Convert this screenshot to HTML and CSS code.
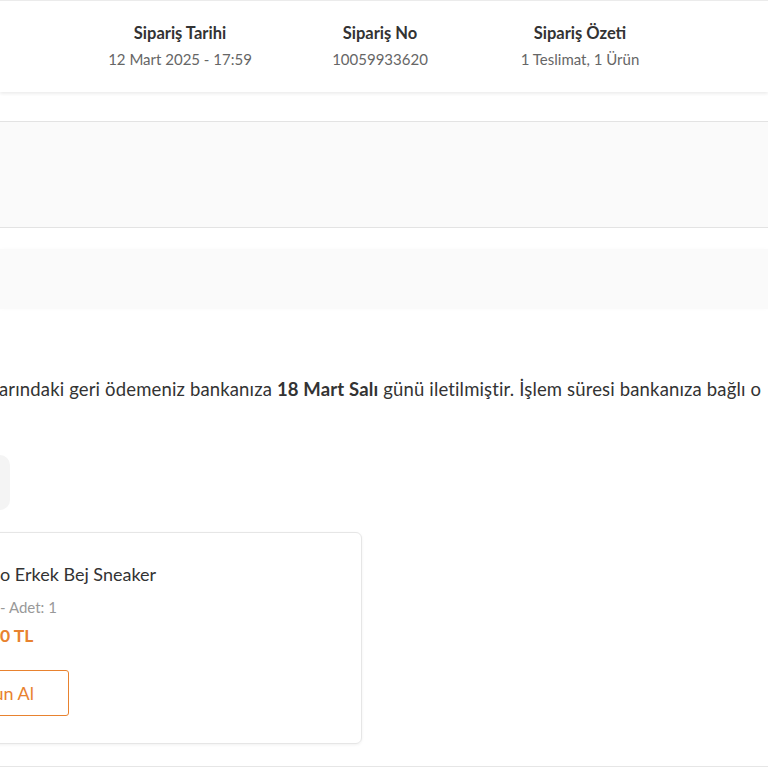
FILE: index.html
```html
<!DOCTYPE html>
<html lang="tr">
<head>
<meta charset="utf-8">
<title>Sipariş Detayı</title>
<link rel="stylesheet" href="styles.css">
</head>
<body>
<div class="page">
  <header class="order-header">
    <div class="col">
      <div class="col-title">Sipariş Tarihi</div>
      <div class="col-value">12 Mart 2025 - 17:59</div>
    </div>
    <div class="col">
      <div class="col-title">Sipariş No</div>
      <div class="col-value">10059933620</div>
    </div>
    <div class="col">
      <div class="col-title">Sipariş Özeti</div>
      <div class="col-value">1 Teslimat, 1 Ürün</div>
    </div>
  </header>

  <section class="status-box"></section>

  <div class="band"></div>

  <p class="refund-note">arındaki geri ödemeniz bankanıza <b>18 Mart Salı</b> günü iletilmiştir. İşlem süresi bankanıza bağlı o</p>

  <div class="pill"></div>

  <div class="card">
    <div class="product-name">o Erkek Bej Sneaker</div>
    <div class="product-meta">- Adet: 1</div>
    <div class="product-price">0 TL</div>
    <button class="rebuy">un Al</button>
  </div>

  <div class="bottom-rule"></div>
</div>
</body>
</html>
```
FILE: styles.css
```css
html, body {
  margin: 0;
  padding: 0;
  background: #fff;
}
body {
  width: 768px;
  height: 768px;
  overflow: hidden;
  font-family: Lato, "Noto Sans", sans-serif;
  color: #333;
}
.page {
  display: flex;
  flex-direction: column;
}
.order-header {
  height: 91px;
  border-top: 1px solid #ebebeb;
  box-shadow: 0 2px 3px rgba(0, 0, 0, 0.07);
  display: flex;
  padding-left: 80px;
  box-sizing: content-box;
}
.col {
  width: 200px;
  display: flex;
  flex-direction: column;
  align-items: center;
  padding-top: 22px;
}
.col-title {
  font-size: 16.5px;
  font-weight: 700;
  color: #333;
  line-height: 20px;
}
.col-value {
  font-size: 15px;
  color: #666;
  line-height: 20px;
  margin-top: 6px;
}
.status-box {
  margin-top: 29px;
  height: 105px;
  background: #fafafa;
  border-top: 1px solid #e3e3e3;
  border-bottom: 1px solid #e3e3e3;
}
.band {
  margin-top: 21px;
  height: 60px;
  background: #fafafa;
  box-shadow: 0 0 4px rgba(0, 0, 0, 0.02);
}
.refund-note {
  margin: 69px 0 0 -1px;
  white-space: nowrap;
  font-size: 18.5px;
  letter-spacing: 0.15px;
  line-height: 22px;
  color: #333;
}
.refund-note b {
  font-weight: 700;
}
.pill {
  margin-top: 55px;
  margin-left: -20px;
  width: 30px;
  height: 55px;
  border-radius: 10px;
  background: #f4f4f4;
}
.card {
  margin-top: 22px;
  margin-left: -20px;
  width: 380px;
  height: 210px;
  border: 1px solid #e6e6e6;
  border-radius: 6px;
  box-shadow: 0 1px 3px rgba(0, 0, 0, 0.06);
  box-sizing: content-box;
  display: flex;
  flex-direction: column;
  align-items: flex-start;
}
.product-name {
  margin-top: 30px;
  margin-left: 19px;
  font-size: 18px;
  line-height: 22px;
  color: #333;
}
.product-meta {
  margin-top: 12px;
  margin-left: 19px;
  font-size: 15px;
  line-height: 20px;
  color: #999;
}
.product-price {
  margin-top: 8px;
  margin-left: 19px;
  font-size: 17.5px;
  font-weight: 700;
  line-height: 22px;
  color: #e8822f;
}
.rebuy {
  margin-top: 23px;
  margin-left: 0;
  width: 88px;
  height: 46px;
  border: 1px solid #e8822f;
  border-radius: 3px;
  background: #fff;
  color: #e8822f;
  font-family: inherit;
  font-size: 18px;
  text-align: right;
  padding: 0 34px 0 0;
}
.bottom-rule {
  margin-top: 22px;
  border-top: 1px solid #e6e6e6;
}
```
